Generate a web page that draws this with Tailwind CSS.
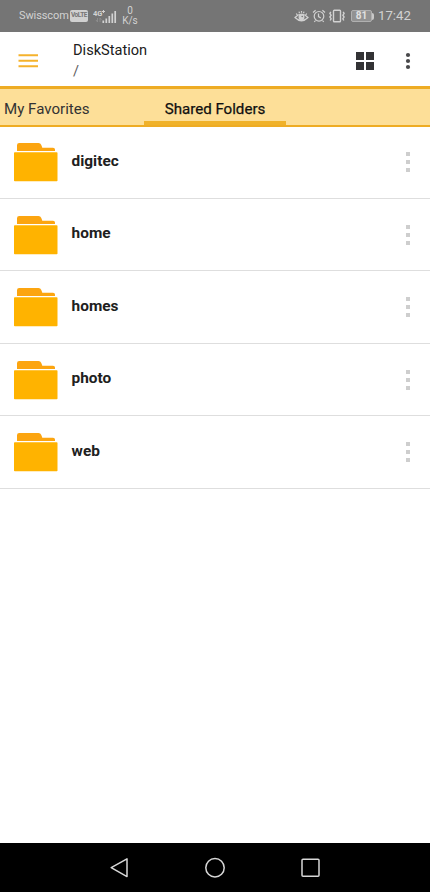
<!DOCTYPE html>
<html lang="en">
<head>
<meta charset="utf-8">
<title>DiskStation</title>
<script src="https://cdn.jsdelivr.net/npm/@tailwindcss/browser@4"></script>
</head>
<body class="bg-white">
<svg class="hidden">
  <symbol id="folder" viewBox="0 0 44 40">
    <path d="M3 9V3.200Q3 1 5.200 1H24.500Q26.500 1 27.300 3L28.300 5.800H39Q41 5.800 41 7.600V9Z" fill="#fca510"/>
    <rect x="0" y="10.300" width="43.500" height="29" rx=".8" fill="#ffb300"/>
  </symbol>
  <symbol id="more" viewBox="0 0 6 22">
    <path d="M1 1h4v4H1zM1 9h4v4H1zM1 17h4v4H1z" fill="#cecece"/>
  </symbol>
</svg>
<div class="flex h-[892px] w-[430px] flex-col overflow-hidden bg-white font-['Roboto',sans-serif] text-[#202020]">
  <div class="flex h-8 shrink-0 items-center bg-[#757575] pl-[19px] pr-[19px] text-[#d2d2d2]">
    <span class="w-[51px] whitespace-nowrap text-[11px] leading-8 tracking-[-0.100px]">Swisscom</span>
    <span class="flex h-[12px] w-[18px] items-center justify-center rounded-[2px] bg-[#d0d0d0] text-[6.500px] font-bold tracking-[-0.400px] text-[#757575]">VoLTE</span>
    <svg class="ml-[5px] h-[15px] w-[24px]" viewBox="0 0 24 15">
      <text x="0" y="7" font-size="7.500" font-weight="700" fill="#d2d2d2">4G</text>
      <path d="M9 2.500h3M10.500 1v3" stroke="#d2d2d2"/>
      <path d="M4.500 13V9M3 11l1.500 2M7 9v4M8.500 11L7 9" stroke="#929292" stroke-width=".8" fill="none"/>
      <path d="M10.300 11.500v2.500M13.300 9.500v4.500M16.300 7v7M19.300 4.500v9.500M22.200 2v12" stroke="#d2d2d2" stroke-width="1.700"/>
    </svg>
    <div class="ml-[5px] w-4 text-center text-[10px] leading-[10.500px]"><div>0</div><div>K/s</div></div>
    <svg class="ml-auto h-[14px] w-[15px]" viewBox="0 0 15 14" fill="none" stroke="#d2d2d2" stroke-width="1.200">
      <path d="M1 8.500Q7.500 1.700 14 8.500Q7.500 15 1 8.500ZM2.300 4.500l1 1.500M5 2.600l.5 1.600M7.500 2v1.700M10 2.600l-.5 1.600M12.700 4.500l-1 1.500"/>
      <circle cx="7.500" cy="8.300" r="2.400" fill="#d2d2d2"/><circle cx="8.200" cy="7.500" r=".8" fill="#757575" stroke="none"/>
    </svg>
    <svg class="ml-[3px] h-[14px] w-[14px]" viewBox="0 0 14 14" fill="none" stroke="#d2d2d2" stroke-width="1.200">
      <circle cx="7" cy="7.300" r="4.800"/><path d="M6.500 4.600v3l2.300 1.300M1 3.500L3.600 1.300M10.400 1.300L13 3.500M3.500 11.500L2.300 13M10.500 11.500l1.200 1.500"/>
    </svg>
    <svg class="ml-[3px] h-[14px] w-[16px]" viewBox="0 0 16 14" fill="none" stroke="#d2d2d2" stroke-width="1.400">
      <rect x="4.500" y="1.200" width="7" height="11.600" rx=".8"/><path d="M1.800 2.800L.9 4.500l1.200 1.700L.9 8l1.200 1.700-.9 1.800M14.200 2.800l.9 1.700-1.200 1.700L15.100 8l-1.200 1.700.9 1.800"/>
    </svg>
    <div class="ml-[6px] flex h-[12px] w-[21px] items-center justify-center rounded-[2px] border border-[#b0b0b0] bg-[#929292] text-[10px] font-bold leading-none text-[#e0e0e0]">81</div>
    <div class="h-[7px] w-[2px] rounded-r-sm bg-[#c8c8c8]"></div>
    <span class="ml-[4px] w-[33px] whitespace-nowrap text-[13.200px] leading-8">17:42</span>
  </div>
  <header class="flex h-[54px] shrink-0 items-center">
    <svg class="ml-[18px] mt-[3px] h-[16px] w-[20px]" viewBox="0 0 20 16"><path d="M.5 2.300h19.500M.5 7.800h19.500M.5 13.300h19.500" stroke="#f5b22c" stroke-width="2"/></svg>
    <div class="ml-[35px] mt-[4px] text-[14.600px] leading-[21px]">
      <div>DiskStation</div>
      <div class="text-[#606060]">/</div>
    </div>
    <svg class="ml-auto mt-[4px] h-[18px] w-[18px]" viewBox="0 0 18 18" fill="#333335"><path d="M0 0h8v8H0zM10 0h8v8h-8zM0 10h8v8H0zM10 10h8v8h-8z"/></svg>
    <svg class="ml-[30.500px] mr-[19.500px] mt-[4px] h-[18px] w-[6px]" viewBox="0 0 6 18" fill="#48484a"><circle cx="3" cy="3" r="2.100"/><circle cx="3" cy="9" r="2.100"/><circle cx="3" cy="15" r="2.100"/></svg>
  </header>
  <nav class="flex h-[40.500px] shrink-0 border-t-3 border-b-2 border-[#eeac24] bg-[#fddf98] text-[15.100px] leading-[40px]">
    <div class="w-[144px] pl-[4px] text-[#333]">My Favorites</div>
    <div class="flex w-[142px] flex-col text-center text-[#101010] [-webkit-text-stroke:0.250px_#101010]"><span class="h-[32px]">Shared Folders</span><span class="h-[4px] bg-[#f0b22a]"></span></div>
  </nav>
  <main class="-mt-[0.500px] flex-1 text-[15.400px] font-bold">
    <div class="flex h-[72.500px] border-b border-[#dedede]"><svg class="ml-[14px] mt-[16px] h-[40px] w-[44px]"><use href="#folder"/></svg><span class="ml-[13.600px] mt-[23.500px] leading-[22px]">digitec</span><svg class="ml-auto mr-[19px] mt-[25px] h-[22px] w-[6px]"><use href="#more"/></svg></div>
    <div class="flex h-[72.500px] border-b border-[#dedede]"><svg class="ml-[14px] mt-[16px] h-[40px] w-[44px]"><use href="#folder"/></svg><span class="ml-[13.600px] mt-[23.500px] leading-[22px]">home</span><svg class="ml-auto mr-[19px] mt-[25px] h-[22px] w-[6px]"><use href="#more"/></svg></div>
    <div class="flex h-[72.500px] border-b border-[#dedede]"><svg class="ml-[14px] mt-[16px] h-[40px] w-[44px]"><use href="#folder"/></svg><span class="ml-[13.600px] mt-[23.500px] leading-[22px]">homes</span><svg class="ml-auto mr-[19px] mt-[25px] h-[22px] w-[6px]"><use href="#more"/></svg></div>
    <div class="flex h-[72.500px] border-b border-[#dedede]"><svg class="ml-[14px] mt-[16px] h-[40px] w-[44px]"><use href="#folder"/></svg><span class="ml-[13.600px] mt-[23.500px] leading-[22px]">photo</span><svg class="ml-auto mr-[19px] mt-[25px] h-[22px] w-[6px]"><use href="#more"/></svg></div>
    <div class="flex h-[72.500px] border-b border-[#dedede]"><svg class="ml-[14px] mt-[16px] h-[40px] w-[44px]"><use href="#folder"/></svg><span class="ml-[13.600px] mt-[23.500px] leading-[22px]">web</span><svg class="ml-auto mr-[19px] mt-[25px] h-[22px] w-[6px]"><use href="#more"/></svg></div>
  </main>
  <footer class="flex h-[49px] shrink-0 justify-between bg-black pl-[110px] pr-[110px] pt-[14px]">
    <svg class="h-[22px] w-[20px]" viewBox="0 0 20 22" fill="none" stroke="#d8d8d8" stroke-width="1.500" stroke-linejoin="round"><path d="M1.200 10.700L17 1.800v17.800Z"/></svg>
    <svg class="h-[22px] w-[22px]" viewBox="0 0 22 22" fill="none" stroke="#d8d8d8" stroke-width="1.500"><circle cx="11" cy="10.700" r="9.200"/></svg>
    <svg class="h-[22px] w-[20px]" viewBox="0 0 20 22" fill="none" stroke="#d8d8d8" stroke-width="1.500"><rect x="2" y="2.200" width="17" height="17" rx="1"/></svg>
  </footer>
</div>
</body>
</html>
